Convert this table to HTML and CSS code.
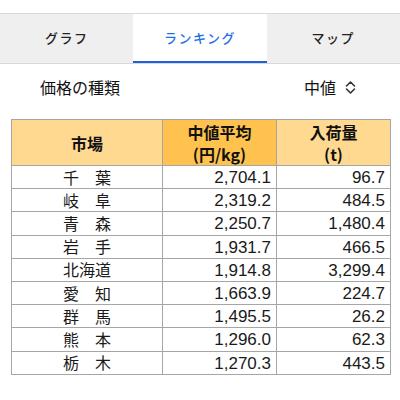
FILE: index.html
```html
<!DOCTYPE html>
<html lang="ja">
<head>
<meta charset="utf-8">
<link rel="stylesheet" href="styles.css">
</head>
<body>
<div class="top-gap"></div>
<nav class="tabs">
  <div class="tab">グラフ</div>
  <div class="tab active">ランキング</div>
  <div class="tab">マップ</div>
</nav>
<div class="setting">
  <span class="label">価格の種類</span>
  <span class="select">中値
    <svg class="chev" width="11" height="15" viewBox="0 0 11 15"><path d="M1.5 6 L5.5 2 L9.5 6 M1.5 9 L5.5 13 L9.5 9" fill="none" stroke="#333" stroke-width="1.6" stroke-linecap="round" stroke-linejoin="round"/></svg>
  </span>
</div>
<table class="rank">
  <colgroup>
    <col class="w1"><col class="w2"><col class="w3">
  </colgroup>
  <thead>
    <tr>
      <th>市場</th>
      <th class="hl">中値平均<br>(円/kg)</th>
      <th>入荷量<br>(t)</th>
    </tr>
  </thead>
  <tbody>
    <tr><td class="name">千　葉</td><td>2,704.1</td><td>96.7</td></tr>
    <tr><td class="name">岐　阜</td><td>2,319.2</td><td>484.5</td></tr>
    <tr><td class="name">青　森</td><td>2,250.7</td><td>1,480.4</td></tr>
    <tr><td class="name">岩　手</td><td>1,931.7</td><td>466.5</td></tr>
    <tr><td class="name">北海道</td><td>1,914.8</td><td>3,299.4</td></tr>
    <tr><td class="name">愛　知</td><td>1,663.9</td><td>224.7</td></tr>
    <tr><td class="name">群　馬</td><td>1,495.5</td><td>26.2</td></tr>
    <tr><td class="name">熊　本</td><td>1,296.0</td><td>62.3</td></tr>
    <tr><td class="name">栃　木</td><td>1,270.3</td><td>443.5</td></tr>
  </tbody>
</table>
</body>
</html>
```
FILE: styles.css
```css
html, body {
  margin: 0;
  padding: 0;
  background: #fff;
  font-family: "Noto Sans CJK JP", "Noto Sans", sans-serif;
  color: #111;
}
.top-gap { height: 13px; }
.tabs {
  display: flex;
  background: #efefef;
  border-top: 1px solid #d8d8d8;
  border-bottom: 1px solid #d8d8d8;
  height: 49px;
}
.tab {
  flex: 1;
  display: flex;
  align-items: center;
  justify-content: center;
  font-size: 13px;
  font-weight: 500;
  letter-spacing: 1.5px;
  color: #222;
  box-sizing: border-box;
  padding-bottom: 2px;
}
.tab.active {
  background: #fff;
  color: #1d6fe8;
  border-bottom: 2px solid #1d63e0;
  padding-bottom: 0;
}
.setting {
  display: flex;
  justify-content: space-between;
  align-items: center;
  height: 46px;
  padding: 0 44px 0 40px;
  font-size: 16px;
}
.select {
  display: flex;
  align-items: center;
  gap: 9px;
}
.chev { display: block; }
.rank {
  margin: 9px 10px 0 11px;
  width: 379px;
  border-collapse: collapse;
  table-layout: fixed;
  font-size: 16px;
}
.w1 { width: 151px; }
.w2 { width: 114px; }
.w3 { width: 114px; }
.rank th, .rank td {
  border: 1px solid #a6a6a6;
  padding: 0 5px;
}
.rank thead tr { height: 46px; }
.rank th {
  background: #ffd98f;
  font-weight: 700;
  line-height: 22px;
  font-size: 16px;
}
.rank th.hl { background: #ffc24e; }
.rank tbody tr { height: 23.2px; }
.rank td {
  text-align: right;
  font-family: "Liberation Sans", "Noto Sans", sans-serif;
  font-size: 17px;
  line-height: 19px;
  color: #1a1a1a;
  padding-top: 1px;
}
.rank td.name {
  text-align: center;
  font-family: "Noto Sans CJK JP", sans-serif;
  font-size: 16px;
  padding-top: 0;
}
```
